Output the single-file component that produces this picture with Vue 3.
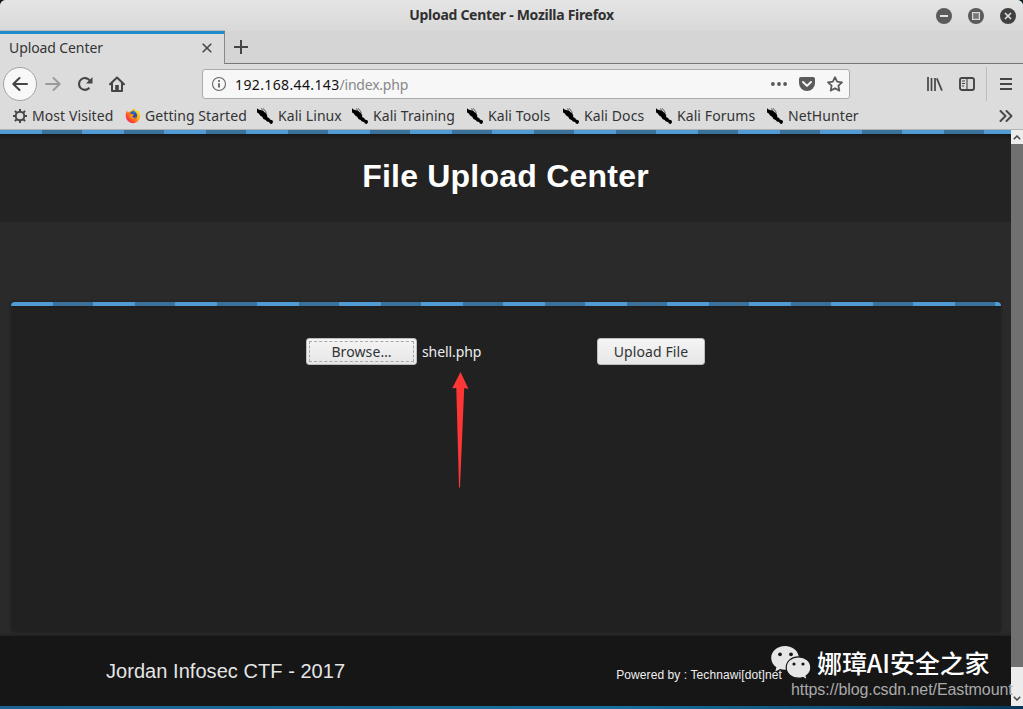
<script setup>
const bookmarks = [
  { label: 'Most Visited', icon: 'gear' },
  { label: 'Getting Started', icon: 'firefox' },
  { label: 'Kali Linux', icon: 'kali' },
  { label: 'Kali Training', icon: 'kali' },
  { label: 'Kali Tools', icon: 'kali' },
  { label: 'Kali Docs', icon: 'kali' },
  { label: 'Kali Forums', icon: 'kali' },
  { label: 'NetHunter', icon: 'kali' },
]
</script>

<template>
  <div class="window">
    <header class="titlebar">
      <span class="window-title">Upload Center - Mozilla Firefox</span>
      <div class="controls">
        <svg width="16" height="16" viewBox="0 0 16 16"><circle cx="8" cy="8" r="8" fill="#5b5b5b" /><path d="M4 8h8" stroke="#e2e2e2" stroke-width="2" /></svg>
        <svg width="16" height="16" viewBox="0 0 16 16"><circle cx="8" cy="8" r="8" fill="#5b5b5b" /><rect x="4.6" y="4.6" width="6.8" height="6.8" fill="#777" stroke="#d8d8d8" stroke-width="1.2" /></svg>
        <svg width="16" height="16" viewBox="0 0 16 16"><circle cx="8" cy="8" r="8" fill="#414141" /><path d="M5 5l6 6M11 5l-6 6" stroke="#dedede" stroke-width="1.7" /></svg>
      </div>
    </header>

    <div class="tabs">
      <div class="tab">
        <span class="tab-label">Upload Center</span>
        <svg width="10" height="10" viewBox="0 0 10 10"><path d="M.7.7l8.6 8.6M9.3.7L.7 9.3" stroke="#484848" stroke-width="1.6" /></svg>
      </div>
      <div class="tab-rest">
        <svg width="14" height="14" viewBox="0 0 14 14"><path d="M7 0v14M0 7h14" stroke="#454545" stroke-width="2" /></svg>
      </div>
    </div>

    <nav class="nav">
      <div class="back">
        <svg width="16" height="16" viewBox="0 0 16 16" fill="none" stroke="#454545" stroke-width="2" stroke-linecap="round" stroke-linejoin="round"><path d="M15 8H1.5M7.5 2L1.3 8l6.2 6" /></svg>
      </div>
      <svg class="forward" width="16" height="16" viewBox="0 0 16 16" fill="none" stroke="#9b9b9b" stroke-width="1.9" stroke-linecap="round" stroke-linejoin="round"><path d="M1 8h13.500M8.500 2l6.200 6-6.200 6" /></svg>
      <svg class="reload" width="16" height="16" viewBox="0 0 16 16"><path d="M12.400 11.800A5.900 5.900 0 1 1 12.700 4.500" fill="none" stroke="#454545" stroke-width="2.100" /><path d="M15.500 1v6.500H9z" fill="#454545" /></svg>
      <svg class="home" width="16" height="16" viewBox="0 0 16 16"><path d="M1 8.300L8 1.500l7 6.800M3 7.500V15h10V7.500" fill="none" stroke="#454545" stroke-width="2" stroke-linejoin="round" stroke-linecap="round" /><path d="M6.200 15V9h3.600v6z" fill="#454545" /></svg>
      <div class="url">
        <svg width="16" height="16" viewBox="0 0 16 16"><circle cx="8" cy="8" r="6.500" fill="none" stroke="#666" stroke-width="1.100" /><path d="M8 7.200V11.500" stroke="#555" stroke-width="1.700" /><circle cx="8" cy="5" r="1" fill="#555" /></svg>
        <span class="address">192.168.44.143<span class="path">/index.php</span></span>
        <svg class="dots" width="16" height="16" viewBox="0 0 16 16" fill="#585858"><circle cx="1.900" cy="8" r="1.900" /><circle cx="8" cy="8" r="1.900" /><circle cx="14.100" cy="8" r="1.900" /></svg>
        <svg class="pocket" width="16" height="16" viewBox="0 0 16 16"><path d="M2 1h12a2 2 0 0 1 2 2v4a8 8 0 0 1-16 0V3a2 2 0 0 1 2-2z" fill="#5b5b5b" /><path d="M4 6l4 3.900L12 6" fill="none" stroke="#f7f7f7" stroke-width="2" stroke-linecap="round" stroke-linejoin="round" /></svg>
        <svg class="star" width="16" height="16" viewBox="0 0 16 16"><path d="M8 1.200l2.100 4.500 4.900.6-3.600 3.400.9 4.900L8 12.200l-4.300 2.400.9-4.900L1 6.300l4.900-.6z" fill="none" stroke="#5b5b5b" stroke-width="1.800" stroke-linejoin="round" /></svg>
      </div>
      <svg class="library" width="16" height="16" viewBox="0 0 16 16" stroke="#454545" stroke-width="1.700"><path d="M1 1v14M4.500 2v13M8 2v13M9.800 2.300L15 14.600" fill="none" /></svg>
      <svg class="sidebar" width="16" height="16" viewBox="0 0 16 16" fill="none" stroke="#454545"><rect x="1" y="2" width="14" height="12" rx="2" stroke-width="1.900" /><path d="M8 2v12M3 5h3M3 7.500h3M3 10h2" stroke-width="1.100" /></svg>
      <div class="menu">
        <svg width="12" height="12" viewBox="0 0 12 12"><path d="M0 1h12M0 6h12M0 11h12" stroke="#454545" stroke-width="1.900" /></svg>
      </div>
    </nav>

    <div class="bookmarks">
      <div v-for="b in bookmarks" :key="b.label" class="bookmark">
        <svg v-if="b.icon === 'gear'" width="16" height="16" viewBox="0 0 16 16" fill="none" stroke="#484848"><circle cx="8" cy="8" r="4.300" stroke-width="2" /><path d="M8 1v3M8 12v3M1 8h3M12 8h3M2.900 2.900L5 5M11 11l2.100 2.100M13.100 2.900L11 5M5 11l-2.100 2.100" stroke-width="2" /></svg>
        <svg v-else-if="b.icon === 'firefox'" width="16" height="16" viewBox="0 0 16 16">
          <defs><linearGradient id="flame" x1="1" y1="0" x2="0" y2="1"><stop offset="0" stop-color="#fff23a" /><stop offset=".4" stop-color="#ffad16" /><stop offset=".7" stop-color="#ff4b2b" /><stop offset="1" stop-color="#e5168e" /></linearGradient></defs>
          <path d="M1.700 2.800L3 4l1.600-.2L7 2.100 8.800.5l2 1.800L14 3.600l1.300 4A7.300 7.300 0 1 1 .7 8.300c0-2 .2-3.500 1-5.500z" fill="url(#flame)" />
          <circle cx="8.200" cy="7.500" r="3.800" fill="#214bb5" /><path d="M4.600 5.600L8 6.100l1.300 1-2 1.300 1.200 1.300 2.700-.5C10 12 5 12 4.200 8.500z" fill="#ff8a13" /><path d="M6 3.500l3-1 2.200 2.500-2 .5z" fill="#1784e5" />
        </svg>
        <svg v-else width="16" height="16" viewBox="0 0 16 16" fill="#000"><path d="M0 .3l1.500 1.200 2.500.8 2 .2 1.300 1.600 1.700 1.200 1.300 2.200-.2 1.500 2 1 .9 1.400 2.700 1.200.3 1.700-1.200 1.700-1.900-.4-.8-1.700-2.200-.5-1.300-1.500-2.200-.9-1-1.900-2.200-1.700L1.500 5.300 0 4.400z" /><path d="M4 .6l1.600 1M6 .2l2.600 3.200L9.400 5.400" fill="none" stroke="#333" stroke-width=".8" /></svg>
        <span>{{ b.label }}</span>
      </div>
      <svg class="more" width="14" height="12" viewBox="0 0 14 12"><path d="M1.500 1l5 5-5 5M7.500 1l5 5-5 5" fill="none" stroke="#484848" stroke-width="1.900" stroke-linecap="round" stroke-linejoin="round" /></svg>
    </div>

    <div class="viewport">
      <main class="page">
        <div class="page-header"><h1>File Upload Center</h1></div>
        <section class="panel">
          <div class="form">
            <button class="browse"><span>Browse…</span></button>
            <span class="filename">shell.php</span>
            <button class="upload">Upload File</button>
          </div>
          <svg class="arrow" width="17" height="116" viewBox="0 0 17 116"><path d="M8.500 0L16.500 17l-4.300-1L8 115.500h-1L4.300 16 .3 16.200z" fill="#ff3636" /></svg>
        </section>
        <footer class="footer">
          <span class="ctf">Jordan Infosec CTF - 2017</span>
          <span class="powered">Powered by : Technawi[dot]net</span>
        </footer>
      </main>
      <aside class="scrollbar">
        <div class="cap"><svg width="8" height="5" viewBox="0 0 8 5"><path d="M.8 4.200L4 1l3.200 3.200" fill="none" stroke="#444" stroke-width="1.500" /></svg></div>
        <div class="thumb"></div>
        <div class="track"><svg width="8" height="5" viewBox="0 0 8 5"><path d="M.8.8L4 4 7.200.8" fill="none" stroke="#444" stroke-width="1.500" /></svg></div>
      </aside>
    </div>
    <div class="desktop"></div>

    <div class="watermark">
      <svg width="41" height="36" viewBox="0 0 41 36">
        <path d="M14 1C6.300 1 .2 6.200.2 13c0 3.900 2 7.200 5.200 9.300L4.300 26.500l4.900-2.500c1.500.4 3.200.7 4.800.7 7.700 0 13.800-5.200 13.800-11.900S21.700 1 14 1z" fill="#e6e6e6" />
        <path d="M27.500 11.800c-6.900 0-12.300 4.600-12.300 10.700 0 6 5.400 10.700 12.300 10.700 1.500 0 3-.3 4.300-.7l4.500 2.500-1.200-4C38 29 39.800 26 39.800 22.500c0-6.100-5.400-10.700-12.300-10.700z" fill="#e6e6e6" stroke="#161617" stroke-width="1.200" />
        <g fill="#161617"><circle cx="9" cy="9.300" r="1.900" /><circle cx="20" cy="9.300" r="1.900" /><circle cx="23" cy="19" r="1.600" /><circle cx="32" cy="19" r="1.600" /></g>
      </svg>
      <span class="brand">娜璋AI安全之家</span>
    </div>
    <div class="blog">https://blog.csdn.net/Eastmount</div>
  </div>
</template>

<style>
body { background: #101c24; overflow: hidden; }
</style>

<style scoped>
* { box-sizing: border-box; }
svg { display: block; flex: none; }
.window { position: relative; width: 1023px; height: 709px; display: flex; flex-direction: column; overflow: hidden; border-radius: 6px 6px 0 0; background: #dcdcdc; font-family: "Noto Sans", "Open Sans", sans-serif; font-size: 14px; color: #343434; white-space: nowrap; }
.titlebar { height: 31px; flex: none; display: grid; grid-template-columns: 1fr auto 1fr; align-items: center; background: linear-gradient(#e5e5e5, #d8d8d8); }
.window-title { grid-column: 2; font-weight: 700; font-size: 14px; letter-spacing: -.29px; color: #303030; padding-bottom: 2px; }
.controls { display: flex; justify-content: flex-end; gap: 16px; padding-right: 7px; }
.tabs { height: 33px; flex: none; display: flex; background: #d5d5d5; }
.tab { width: 225px; border-top: 3px solid #208bcb; border-right: 1px solid #888; background: #dcdcdc; display: flex; align-items: center; justify-content: space-between; padding: 0 12px 2px 9px; box-shadow: 0 -1px #bbb; }
.tab-label { letter-spacing: -.1px; padding-bottom: 2px; }
.tab-rest { flex: 1; border-bottom: 1px solid #777; display: flex; align-items: center; padding-left: 9px; }
.nav { height: 40px; flex: none; display: flex; align-items: center; }
.back { width: 34px; height: 34px; margin-left: 3px; border-radius: 50%; background: #f8f8f8; border: 1px solid #a3a3a3; display: flex; align-items: center; justify-content: center; }
.forward { margin-left: 8px; }
.reload { margin-left: 16px; }
.home { margin-left: 16px; }
.url { width: 648px; height: 30px; margin-left: 77px; border: 1px solid #aaa; border-radius: 3px; background: #f7f7f7; display: flex; align-items: center; padding: 0 6px 0 8px; }
.address { margin-left: 8px; color: #111; flex: 1; letter-spacing: .37px; }
.path { color: #888; letter-spacing: -.22px; }
.pocket { margin-left: 12px; }
.star { margin-left: 12px; }
.library { margin-left: 77px; }
.sidebar { margin-left: 16px; }
.menu { height: 34px; margin-left: 11px; padding-left: 13px; border-left: 1px solid #bdbdbd; display: flex; align-items: center; }
.bookmarks { height: 26px; flex: none; display: grid; grid-template-columns: 113px 132px 95px 115px 96px 93px 111px 1fr 14px; align-items: center; padding: 0 10px 1px 12px; border-bottom: 1px solid #b3b3b3; }
.bookmark { display: flex; align-items: center; gap: 5px; letter-spacing: .08px; }
.bookmark span { padding-bottom: 2px; }
.bookmark:nth-child(-n+2) { gap: 4px; }
.viewport { height: 576px; flex: none; display: flex; }
.page { width: 1011px; background: #2a2a2b; display: flex; flex-direction: column; font-family: "Liberation Sans", Arial, sans-serif; }
.page-header { height: 92px; flex: none; display: flex; justify-content: center; padding-top: 28px; background: repeating-linear-gradient(90deg, #519bd5 0 42px, #39719b 42px 82px) top / 100% 4px no-repeat, linear-gradient(#171718, #232324 6px) 0 4px no-repeat, #232324; }
h1 { margin: 0; font-size: 32px; line-height: 36px; font-weight: 700; letter-spacing: .22px; color: #fff; }
.panel { height: 330px; flex: none; margin: 80px 10px 4px 11px; border-radius: 4px; position: relative; background: repeating-linear-gradient(90deg, #519bd5 0 42px, #39719b 42px 82px) top / 100% 4px no-repeat, linear-gradient(#171718, #212122 7px); box-shadow: 0 0 3px #1d1d1e; }
.form { display: flex; align-items: center; padding: 36px 0 0 295px; font-family: "Noto Sans", sans-serif; color: #eee; }
button { height: 27px; padding: 0; border: 1px solid #bdbdbd; border-radius: 3px; background: linear-gradient(#f4f4f4, #e7e7e7); font: 14px "Noto Sans", sans-serif; color: #303436; }
.browse { width: 111px; padding: 2px; }
.browse span { display: block; height: 21px; line-height: 19px; border: 1px dashed #a9a9a9; letter-spacing: .1px; }
.filename { margin-left: 5px; width: 175px; letter-spacing: -.1px; }
.upload { width: 108px; letter-spacing: .1px; }
.arrow { position: absolute; left: 441px; top: 70px; }
.footer { height: 70px; display: flex; justify-content: space-between; align-items: center; padding: 0 229px 0 106px; background: #161617; box-shadow: 0 -1px 2px #202021; color: #e5e5e5; }
.ctf { font-size: 20px; letter-spacing: .05px; }
.powered { font-size: 12px; padding-top: 8px; color: #eee; letter-spacing: .09px; }
.scrollbar { width: 12px; display: flex; flex-direction: column; background: #ececec; }
.cap { height: 14px; display: flex; align-items: center; justify-content: center; }
.thumb { height: 523px; background: #707070; }
.track { height: 39px; display: flex; align-items: flex-end; justify-content: center; padding-bottom: 5px; }
.desktop { height: 3px; flex: none; background: linear-gradient(90deg, #1d6494, #176f9f 60%, #073758); }
.watermark { position: absolute; left: 771px; top: 644px; display: flex; align-items: center; gap: 5px; }
.brand { font: 500 25px/36px "Noto Sans CJK SC", sans-serif; letter-spacing: -.1px; color: #fff; padding-bottom: 2px; }
.blog { position: absolute; left: 791px; top: 680px; font: 16px/20px "Liberation Sans", Arial, sans-serif; letter-spacing: -.08px; color: #aaa; }
</style>
